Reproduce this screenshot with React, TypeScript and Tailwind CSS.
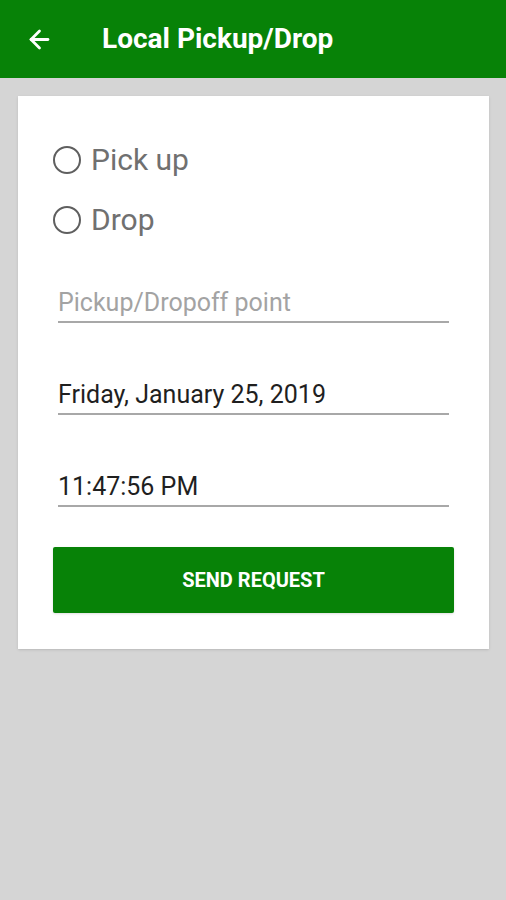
import { ArrowLeft } from 'lucide-react';

const font = { fontFamily: 'Roboto, "Noto Sans", sans-serif' };

const Radio = ({ label }: { label: string }) => (
  <div className="flex h-[60px] items-center">
    <span className="h-[28px] w-[28px] shrink-0 rounded-full border-2 border-[#5f5f5f]" />
    <span className="ml-[10px] text-[30px] leading-none text-[#707070]">{label}</span>
  </div>
);

const Field = ({ value, placeholder }: { value?: string; placeholder?: string }) => (
  <div className="mx-[5px] border-b-2 border-[#a8a8a8] pb-[3px]">
    <div className={`h-[30px] text-[25px] leading-[30px] ${value ? 'text-[#1f1f1f]' : 'text-[#a3a3a3]'}`}>
      {value ?? placeholder}
    </div>
  </div>
);

export default function App() {
  return (
    <div className="min-h-[900px] bg-[#d5d5d5]" style={font}>
      <header className="flex h-[78px] items-center bg-[#078207] text-white">
        <ArrowLeft className="ml-[25px] h-[29px] w-[29px]" strokeWidth={2.3} />
        <h1 className="ml-[48px] text-[28px] font-bold">Local Pickup/Drop</h1>
      </header>

      <main className="pl-[18px] pr-[17px] pt-[18px]">
        <div className="bg-white px-[35px] pb-[36px] pt-[34px] shadow-sm">
          <Radio label="Pick up" />
          <Radio label="Drop" />

          <div className="mt-[38px] flex flex-col gap-[57px]">
            <Field placeholder="Pickup/Dropoff point" />
            <Field value="Friday, January 25, 2019" />
            <Field value="11:47:56 PM" />
          </div>

          <button className="mt-[40px] flex h-[66px] w-full items-center justify-center rounded-[2px] bg-[#078207] text-[20px] font-bold text-white shadow">
            SEND REQUEST
          </button>
        </div>
      </main>
    </div>
  );
}
